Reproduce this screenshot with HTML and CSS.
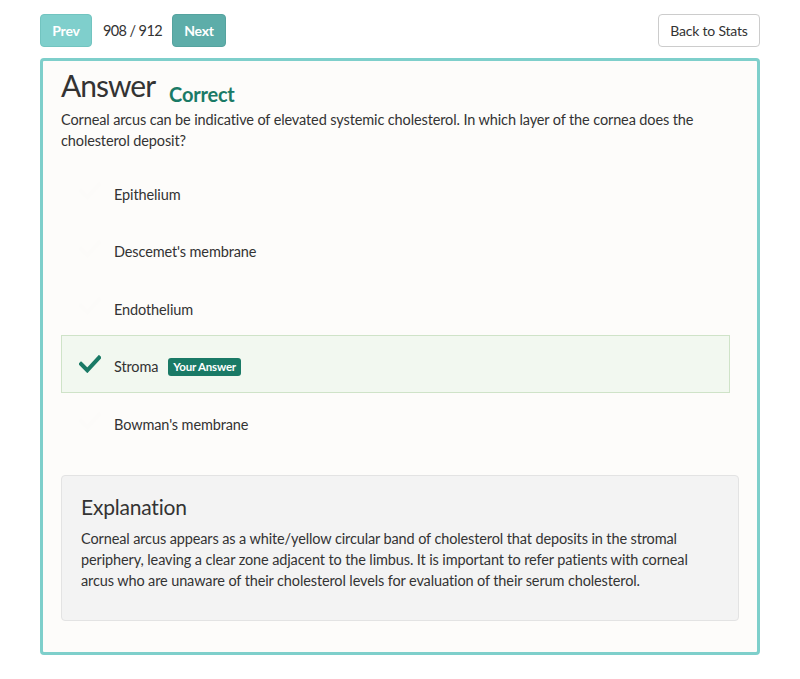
FILE: index.html
```html
<!DOCTYPE html>
<html>
<head>
<meta charset="utf-8">
<link rel="stylesheet" href="styles.css">
</head>
<body>
<div class="page">
  <div class="toolbar">
    <div class="pager">
      <button class="btn btn-prev">Prev</button>
      <span class="count">908 / 912</span>
      <button class="btn btn-next">Next</button>
    </div>
    <button class="btn btn-back">Back to Stats</button>
  </div>
  <div class="panel">
    <div class="title-row">
      <h1 class="title">Answer</h1>
      <span class="status">Correct</span>
    </div>
    <p class="question">Corneal arcus can be indicative of elevated systemic cholesterol. In which layer of the cornea does the cholesterol deposit?</p>
    <ul class="options">
      <li class="option"><svg class="check" viewBox="0 0 24 20"><path d="M2 10 L9 17 L22 3" /></svg><span class="opt-text">Epithelium</span></li>
      <li class="option"><svg class="check" viewBox="0 0 24 20"><path d="M2 10 L9 17 L22 3" /></svg><span class="opt-text">Descemet's membrane</span></li>
      <li class="option"><svg class="check" viewBox="0 0 24 20"><path d="M2 10 L9 17 L22 3" /></svg><span class="opt-text">Endothelium</span></li>
      <li class="option option-correct"><svg class="check" viewBox="0 0 24 20"><path d="M2 10 L9 17 L22 3" /></svg><span class="opt-text">Stroma</span><span class="badge">Your Answer</span></li>
      <li class="option"><svg class="check" viewBox="0 0 24 20"><path d="M2 10 L9 17 L22 3" /></svg><span class="opt-text">Bowman's membrane</span></li>
    </ul>
    <div class="explanation">
      <h2 class="exp-title">Explanation</h2>
      <p class="exp-text">Corneal arcus appears as a white/yellow circular band of cholesterol that deposits in the stromal periphery, leaving a clear zone adjacent to the limbus. It is important to refer patients with corneal arcus who are unaware of their cholesterol levels for evaluation of their serum cholesterol.</p>
    </div>
  </div>
</div>
</body>
</html>
```

FILE: styles.css
```css
* { box-sizing: border-box; }
html, body { margin: 0; padding: 0; background: #ffffff; }
body {
  font-family: "Lato", "Open Sans", sans-serif;
  color: #333333;
  font-size: 14.5px;
  letter-spacing: -0.12px;
}
.page {
  width: 720px;
  margin: 0 0 0 40px;
  padding-top: 14px;
}
.toolbar {
  display: flex;
  justify-content: space-between;
  align-items: center;
  height: 33px;
}
.pager {
  display: flex;
  align-items: center;
  gap: 10px;
}
.btn {
  font-family: inherit;
  height: 33px;
  border-radius: 4px;
  font-size: 14px;
  letter-spacing: -0.2px;
  padding: 0 12px;
  border: 1px solid transparent;
  cursor: pointer;
}
.btn-prev {
  background: #7fcfcc;
  border-color: #72c4c0;
  color: #ffffff;
  font-weight: 700;
  width: 52px;
  padding: 0;
  margin-right: 1px;
}
.btn-next {
  background: #5dada9;
  border-color: #55a39f;
  color: #ffffff;
  font-weight: 700;
  width: 54px;
  padding: 0;
}
.count {
  font-size: 14.5px;
  letter-spacing: -0.6px;
  color: #333;
}
.btn-back {
  background: #ffffff;
  border-color: #cccccc;
  color: #333333;
  width: 102px;
  padding: 0;
}
.panel {
  margin-top: 11px;
  border: 3px solid #7ecfcb;
  border-radius: 4px;
  background: #fdfcfa;
  padding: 6px 18px 31px 18px;
}
.title-row {
  display: flex;
  align-items: flex-end;
  gap: 14px;
}
.title {
  margin: 0;
  font-size: 30px;
  font-weight: 400;
  letter-spacing: -1px;
  line-height: 36px;
  color: #333;
}
.status {
  font-size: 20px;
  font-weight: 700;
  letter-spacing: -0.2px;
  color: #1a7a66;
  line-height: 26px;
  position: relative;
  top: 4px;
}
.question {
  margin: 6px 0 0 0;
  line-height: 21px;
}
.options {
  list-style: none;
  margin: 11.5px 9px 0 0;
  padding: 0;
}
.option {
  display: flex;
  align-items: center;
  height: 57.5px;
  padding-left: 17px;
  border: 1px solid transparent;
}
.option-correct {
  background: #f2f8f0;
  border-color: #cfe3c8;
}
.check {
  width: 22px;
  height: 18px;
  margin-right: 13px;
  fill: none;
  stroke: #fcfbf9;
  stroke-width: 4.5;
  stroke-linecap: square;
}
.option-correct .check {
  stroke: #1a7a66;
}
.opt-text {
  margin-top: 6px;
}
.badge {
  margin-top: 6px;
  margin-left: 10px;
  background: #1a7a66;
  color: #fff;
  font-size: 11.5px;
  font-weight: 700;
  letter-spacing: -0.2px;
  padding: 3px 5px;
  border-radius: 3px;
  line-height: 12px;
}
.explanation {
  margin-top: 25px;
  background: #f3f3f3;
  border: 1px solid #e3e3e3;
  border-radius: 4px;
  padding: 18px 19px 29px;
}
.exp-title {
  margin: 0;
  font-size: 21px;
  font-weight: 400;
  letter-spacing: -0.2px;
  line-height: 26px;
}
.exp-text {
  margin: 8px 0 0 0;
  line-height: 21px;
}
```
